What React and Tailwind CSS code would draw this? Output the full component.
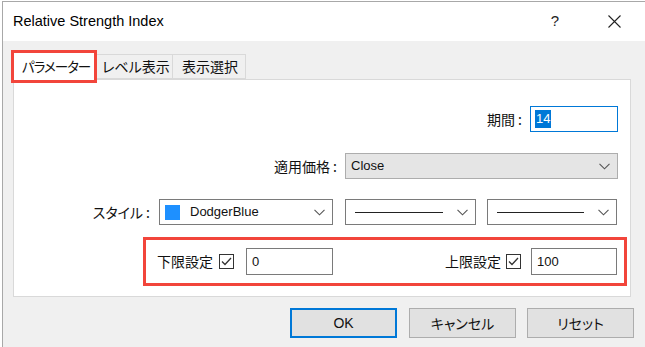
import React from "react";

const jp = { fontFamily: '"Noto Sans CJK JP", "Noto Sans", sans-serif', fontFeatureSettings: '"palt"' };
const lat = { fontFamily: '"Liberation Sans", "Noto Sans CJK JP", sans-serif' };

function Chevron() {
  return (
    <svg width="11" height="7" viewBox="0 0 11 7" className="shrink-0">
      <path d="M0.5 0.8 L5.5 5.8 L10.5 0.8" fill="none" stroke="#555" strokeWidth="1.1" />
    </svg>
  );
}

function Check() {
  return (
    <div className="w-[15px] h-[15px] border border-[#333] bg-white flex items-center justify-center shrink-0">
      <svg width="11" height="9" viewBox="0 0 11 9">
        <path d="M1 4.5 L4 7.5 L10 1" fill="none" stroke="#333" strokeWidth="1.3" />
      </svg>
    </div>
  );
}

function LineSelect({ w }) {
  return (
    <div className={`h-[26px] border border-[#7a7a7a] bg-white flex items-center pl-[9px] pr-[7px] ${w}`}>
      <div className="flex-1 h-[1px] bg-[#222] mr-[14px]" />
      <Chevron />
    </div>
  );
}

export default function App() {
  return (
    <div className="w-[645px] h-[347px] bg-white overflow-hidden">
      <div className="ml-[2px] mt-[1px] h-[346px] border-l border-t border-[#a8a8a8] bg-[#f0f0f0] flex flex-col">
        {/* title bar */}
        <div className="h-[39px] bg-white flex items-center pl-[10px] shrink-0">
          <span className="text-[14.5px] text-black" style={lat}>Relative Strength Index</span>
          <span className="ml-auto text-[15px] text-[#222] mr-[49px]" style={lat}>?</span>
          <svg width="13" height="13" viewBox="0 0 13 13" className="mr-[24px]">
            <path d="M0.5 0.5 L12.5 12.5 M12.5 0.5 L0.5 12.5" stroke="#222" strokeWidth="1.1" />
          </svg>
        </div>

        {/* tabs */}
        <div className="pl-[10px] pt-[12px] flex items-end shrink-0 relative z-10">
          <div className="ml-[1px] w-[80px] h-[27px] -mb-[1px] bg-white outline-[3px] outline-solid outline-[#f2453b] flex items-center pl-[8px] text-[13.5px] tracking-[-1px] text-[#111] whitespace-nowrap" style={jp}>
            パラメーター
          </div>
          <div className="ml-[3px] w-[76px] h-[25px] border border-[#d9d9d9] border-l-0 bg-[#f0f0f0] flex items-center pl-[5px] text-[14px] text-[#111] whitespace-nowrap" style={jp}>
            レベル表示
          </div>
          <div className="w-[73px] h-[25px] border border-[#d9d9d9] border-l-0 bg-[#f0f0f0] flex items-center pl-[9px] text-[14px] text-[#111] whitespace-nowrap" style={jp}>
            表示選択
          </div>
        </div>

        {/* panel */}
        <div className="ml-[10px] w-[618px] h-[218px] bg-white border border-[#d9d9d9] shrink-0 flex flex-col">
          <div className="mt-[26px] flex justify-end items-center pr-[12px]">
            <span className="text-[14px] text-[#111] mr-[8px] whitespace-nowrap" style={jp}>期間 :</span>
            <div className="w-[88px] h-[26px] border border-[#0078d7] flex items-center pl-[4px]">
              <span className="bg-[#0078d7] text-white text-[13px] leading-[18px] px-[1px]" style={lat}>14</span>
            </div>
          </div>

          <div className="mt-[21px] flex justify-end items-center pr-[12px]">
            <span className="text-[14px] text-[#111] mr-[8px] whitespace-nowrap" style={jp}>適用価格 :</span>
            <div className="w-[273px] h-[26px] border border-[#adadad] bg-[#e5e5e5] flex items-center pl-[5px] pr-[7px]">
              <span className="text-[13px] text-[#111] flex-1" style={lat}>Close</span>
              <Chevron />
            </div>
          </div>

          <div className="mt-[20px] flex justify-end items-center pr-[13px]">
            <span className="text-[14px] text-[#111] mr-[9px] whitespace-nowrap" style={jp}>スタイル :</span>
            <div className="w-[174px] h-[26px] border border-[#7a7a7a] bg-white flex items-center pl-[5px] pr-[7px]">
              <div className="w-[15px] h-[15px] bg-[#1e90ff] mr-[10px]" />
              <span className="text-[13px] text-[#111] flex-1" style={lat}>DodgerBlue</span>
              <Chevron />
            </div>
            <LineSelect w="w-[131px] ml-[12px]" />
            <LineSelect w="w-[130px] ml-[11px]" />
          </div>

          <div className="mt-[12px] ml-[129px] w-[484px] h-[49px] border-[3px] border-[#f2453b] flex items-center pl-[11px] pr-[7px]">
            <span className="text-[14px] text-[#111] mr-[6px] whitespace-nowrap" style={jp}>下限設定</span>
            <Check />
            <div className="ml-[12px] w-[87px] h-[27px] border border-[#7a7a7a] bg-white flex items-center pl-[5px]">
              <span className="text-[13px] text-[#111]" style={lat}>0</span>
            </div>
            <span className="ml-auto text-[14px] text-[#111] mr-[5px] whitespace-nowrap" style={jp}>上限設定</span>
            <Check />
            <div className="ml-[10px] w-[86px] h-[27px] border border-[#7a7a7a] bg-white flex items-center pl-[5px]">
              <span className="text-[13px] text-[#111]" style={lat}>100</span>
            </div>
          </div>
        </div>

        {/* buttons */}
        <div className="mt-[11px] pl-[287px] flex items-center">
          <button className="w-[107px] h-[30px] border-2 border-[#0078d7] bg-[#e1e1e1] text-[14px] text-[#111]" style={lat}>OK</button>
          <button className="ml-[12px] w-[107px] h-[30px] border border-[#adadad] bg-[#e1e1e1] text-[14px] text-[#111]" style={jp}>キャンセル</button>
          <button className="ml-[11px] w-[107px] h-[30px] border border-[#adadad] bg-[#e1e1e1] text-[14px] text-[#111]" style={jp}>リセット</button>
        </div>
      </div>
    </div>
  );
}
